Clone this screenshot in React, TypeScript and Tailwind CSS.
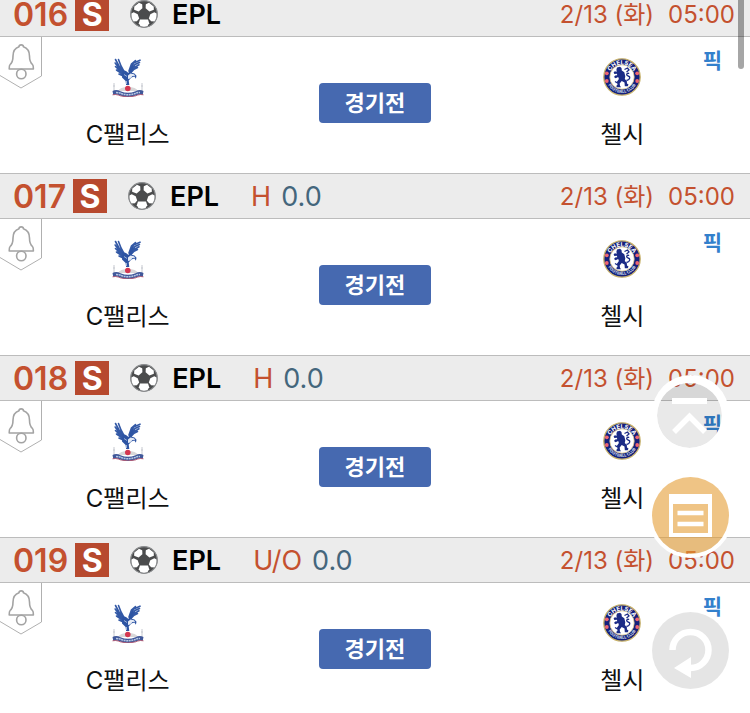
import type { ReactNode } from "react";
import clsx from "clsx";

type Match = {
  no: string;
  market?: string;
  line?: string;
};

const matches: Match[] = [
  { no: "016" },
  { no: "017", market: "H", line: "0.0" },
  { no: "018", market: "H", line: "0.0" },
  { no: "019", market: "U/O", line: "0.0" },
];

function SoccerBall() {
  return (
    <svg viewBox="0 0 28 28" className="size-7 shrink-0" aria-hidden="true">
      <circle cx="14" cy="14" r="13.5" fill="#4b4c4d" />
      <g fill="#fff">
        <path d="M4.300 6.500 9 2.800l3.200 1.400.2 4-3.800 3.200-4.500-1.700z" />
        <path d="M23.700 6.500 19 2.800l-3.200 1.400-.2 4 3.800 3.200 4.500-1.700z" />
        <path d="m1.300 13.400 2.400-1.200 4 2 1.500 4.200-2.300 2.800-4 .2c-1.300-2.300-1.900-5-1.600-8z" />
        <path d="m26.700 13.400-2.400-1.200-4 2-1.500 4.200 2.300 2.800 4 .2c1.300-2.300 1.900-5 1.600-8z" />
        <path d="M10 19.400h8l1.200 3.800-1.700 3.100c-2 .8-5 .8-7 0l-1.700-3.100z" />
      </g>
      <circle cx="14" cy="14" r="13.300" fill="none" stroke="#8b8d8f" strokeWidth="1.200" />
    </svg>
  );
}

function PalaceCrest() {
  return (
    <svg viewBox="0 0 34 40" className="h-10 w-[34px]" aria-hidden="true">
      {/* wings */}
      <g fill="none" stroke="#3359a6" strokeWidth="1.600" strokeLinecap="round">
        <path d="M7.500 2.500 10 9l3.500 6.500M4.500 2.500 8 9l5 7M4.200 6l4 5.500 5 5.500M4.500 9.500 9 14l4.500 4M5.500 13l4.500 3.200 4 2.800M8 17l6.500 3" />
        <path d="M29 3.200 22.500 6l-4 8.500M28.500 5.500 24 7.500l-5 8M28 7.800 24 10l-4.500 6M26.500 10.500 23 12.300 19.500 16M24.500 3.500l-4 3.500-2.500 7" />
      </g>
      {/* body and head */}
      <path
        d="m11.500 13 3.500 1 2.500 2 2-5.500L23 6.500l-1 6-1.500 3.300 3 .8 2 2.200-.6 3-1.500-2.300-3 1-2.700 3 .6 4.500h-3.200l-.5-4-3.600-3.500z"
        fill="#2d54a3"
      />
      <path d="m17 18.500 2.500-2 3.500.8 1.200 1.400-2.700.3-2.500 2.500-2 .5z" fill="#e4eaf5" />
      <path d="m13 17.500 3 2M15.500 24v3" stroke="#b9c9e4" strokeWidth=".8" />
      {/* palace towers */}
      <path d="M3 26v8M31 26v8M2 29h2M30 29h2" stroke="#c6c9d0" strokeWidth="1" />
      <path d="M7 34q2-4 10-4t10 4z" fill="#d8d7d8" />
      <circle cx="16.800" cy="31.500" r="2.800" fill="#d43750" />
      {/* ribbon */}
      <path
        d="M1.500 34q4-2 8 .3 7.500 3 15 0 4-2.300 8-.3l-.8 4q-3-1.200-6.700.5-8 3-16 0-3.700-1.700-6.700-.5z"
        fill="#40589a"
      />
      <path d="M5 35.400q3.500.2 5 1.100 7 2.500 14 0 2-1 5-1.100" fill="none" stroke="#b7c7e3" strokeWidth="1.500" strokeDasharray="2 .6" />
      <path d="m1.500 37.800 3-.3q3 .3 5 1.400 7.500 2.200 15 0 2-1.100 5-1.400l3 .3" fill="none" stroke="#b4576e" strokeWidth=".9" />
    </svg>
  );
}

function ChelseaCrest() {
  return (
    <svg viewBox="0 0 40 40" className="size-10" aria-hidden="true">
      <defs>
        <path id="crest-top" d="M7 20.500a13 13 0 0 1 26 0" />
        <path id="crest-bottom" d="M4 20a16 16 0 0 0 32 0" />
      </defs>
      <circle cx="20" cy="20" r="18.200" fill="#14207c" stroke="#c9b36b" strokeWidth="1.300" />
      <circle cx="20" cy="20" r="12.200" fill="#fff" stroke="#d6c48a" strokeWidth=".8" />
      <text fill="#fff" fontSize="6" fontWeight="700" fontFamily="Inter, sans-serif" textAnchor="middle">
        <textPath href="#crest-top" startOffset="50%">CHELSEA</textPath>
      </text>
      <text fill="#dfe3f0" fontSize="4" fontWeight="700" fontFamily="Inter, sans-serif" textAnchor="middle">
        <textPath href="#crest-bottom" startOffset="50%">FOOTBALL CLUB</textPath>
      </text>
      <g fill="#ed6672">
        <circle cx="4.800" cy="16.300" r="1.900" />
        <circle cx="4.800" cy="24" r="1.900" />
        <circle cx="35.200" cy="16.300" r="1.900" />
        <circle cx="35.200" cy="24" r="1.900" />
      </g>
      {/* lion with staff */}
      <path
        d="m15 10.500 3-.8 1.500 1.200.3 2.600 2.500 1.800 1 4-.5 2.700 2 2 .2 2.500 1.500 1-.7 1.700h-3l-.3-3.800-2.800-1.500-2 2.500.3 2.300 1 1.500h-4l-.8-1.300 1.300-1.200-.6-3 2-2.700-.7-2-2.600 1.300-1.600-1.300 1.200-1.500 2-.3-.2-1.500-2.600.2-.8-1.500 1.200-1.200 2 .5-.4-1.900z"
        fill="#1b2b86"
      />
      <path
        d="M24.500 23.500c4-1 4-4 1.500-4.500-2.500-1-1-3.500 1.200-2.500M22.500 12.500l3-1.500 1.500 2-2.500 2M13 24.500l2.500 1.500"
        fill="none"
        stroke="#1b2b86"
        strokeWidth="1.300"
      />
    </svg>
  );
}

function AlarmTag() {
  return (
    <button type="button" aria-label="알림" className="absolute top-0 left-0">
      <svg viewBox="0 0 42 53" className="block h-[53px] w-[42px]" fill="none">
        <path d="M41.500 0v39L21 51 0 38.500" stroke="#b0b0b0" strokeWidth="1" />
        <g stroke="#a3a3a3" strokeWidth="1.600" strokeLinejoin="round">
          <path d="M19 9.700c0-2.400 4.400-2.400 4.400 0 4.500 1.500 6.100 4.800 6.100 9.300 0 4.800.8 6.700 3 8.500.9.800.9 1.800.9 4.500H9.200c0-2.700 0-3.700.9-4.500 2.200-1.800 2.900-3.700 2.900-8.500 0-4.500 1.500-7.800 6-9.300z" />
          <circle cx="21.300" cy="37" r="4.700" />
        </g>
      </svg>
    </button>
  );
}

function Team({ name, children }: { name: string; children: ReactNode }) {
  return (
    <div className="flex flex-col items-center gap-5">
      {children}
      <span className="text-[24px] leading-9 whitespace-nowrap text-[#111]">{name}</span>
    </div>
  );
}

function MatchRow({ match }: { match: Match }) {
  return (
    <li>
      <header className="flex h-[46px] items-center border-y border-[#bcbcbc] bg-[#ececec] pr-[15px] pl-[13px] leading-7">
        <span className="pt-0.5 text-[32px] leading-7 font-semibold text-[#c4512f]">{match.no}</span>
        <span className="ml-[7px] flex size-[34px] items-center justify-center bg-[#b7492e] pt-0.5 text-[32px] leading-7 font-bold text-white">
          S
        </span>
        <span className="ml-[21px] flex items-center gap-3.5">
          <SoccerBall />
          <span className="pt-0.5 text-[27px] leading-7 font-semibold text-black">EPL</span>
        </span>
        {match.market && (
          <span className="ml-8 flex gap-2.5 pt-0.5 text-[27px] leading-7">
            <span className="text-[#c4512f]">{match.market}</span>
            <span className="text-[#44667c]">{match.line}</span>
          </span>
        )}
        <time className="ml-auto flex gap-3.5 pt-0.5 text-[24px] leading-7 text-[#c4512f]">
          <span>2/13 (화)</span>
          <span>05:00</span>
        </time>
      </header>

      <div className="relative grid h-[136px] grid-cols-3 items-start bg-white px-1 pt-5">
        <AlarmTag />
        <Team name="C팰리스">
          <PalaceCrest />
        </Team>
        <button
          type="button"
          className="mt-[26px] h-10 w-28 justify-self-center rounded bg-[#4669b0] text-[22px] leading-10 font-bold text-white"
        >
          경기전
        </button>
        <Team name="첼시">
          <ChelseaCrest />
        </Team>
        <button type="button" className="absolute top-2 right-7 text-[21px] leading-8 font-bold text-[#3380cc]">
          픽
        </button>
      </div>
    </li>
  );
}

function FloatingButton({ label, className, children }: { label: string; className: string; children: ReactNode }) {
  return (
    <button type="button" aria-label={label} className={clsx("size-[77px] rounded-full", className)}>
      <svg viewBox="0 0 77 77" className="size-full" fill="none">
        {children}
      </svg>
    </button>
  );
}

export default function App() {
  return (
    <main className="relative h-screen overflow-hidden bg-white font-['Inter','Noto_Sans_CJK_KR',sans-serif]">
      {/* list is scrolled slightly past the first header */}
      <ul className="-mt-[9px]">
        {matches.map((m) => (
          <MatchRow key={m.no} match={m} />
        ))}
      </ul>

      <div className="absolute top-0 right-1.5 h-[69px] w-1.5 rounded-b-full bg-black/35" />

      <nav className="absolute top-[375px] right-[21px] flex flex-col">
        <FloatingButton label="맨 위로" className="mb-[25px]">
          <circle cx="37.500" cy="40.500" r="32.500" fill="#000" fillOpacity=".085" />
          <path
            fillRule="evenodd"
            d="M38.500 0a38.500 38.500 0 1 0 0 77 38.500 38.500 0 1 0 0-77zM37.500 8a32.500 32.500 0 1 1 0 65 32.500 32.500 0 1 1 0-65z"
            fill="#fff"
          />
          <path d="M20 26h35" stroke="#fff" strokeWidth="6" />
          <path d="m22 57 15.500-15.500L53 57" stroke="#fff" strokeWidth="5.500" />
        </FloatingButton>
        <FloatingButton label="목록" className="mb-[58px] bg-[#e59d33]/60 shadow-[0_0_0_4px_white]">
          <path fillRule="evenodd" d="M17 17h43v43H17zM21 27v29h35V27z" fill="#fff" />
          <path d="M25.500 36H51.500M25.500 47H51.500" stroke="#fff" strokeWidth="4.500" />
        </FloatingButton>
        <FloatingButton label="새로고침" className="bg-black/10 shadow-[0_0_0_4px_white]">
          <path d="M20.500 38a18 18 0 1 1 18 18" stroke="#fff" strokeWidth="6.500" />
          <path d="M22 56 39 45v21z" fill="#fff" />
        </FloatingButton>
      </nav>
    </main>
  );
}
